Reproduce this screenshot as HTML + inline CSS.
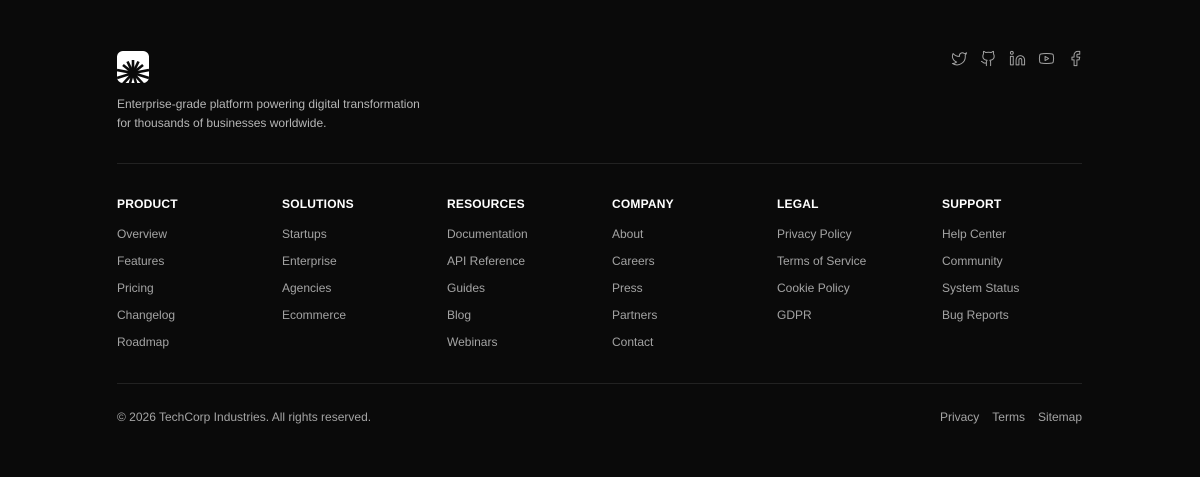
<!DOCTYPE html>
<html><head><meta charset="utf-8"><style>
*{margin:0;padding:0;box-sizing:border-box}
body{width:1200px;height:477px;background:#0a0a0a;font-family:"Liberation Sans",sans-serif;color:#a3a3a3;position:relative;overflow:hidden}
.abs{position:absolute}
.tag{left:117px;top:95px;font-size:12px;line-height:19px;color:#b5b5b5}
.hr{left:117px;width:965px;height:1px;background:#222}
.col{position:absolute;top:196px}
.col h4{font-size:12px;font-weight:bold;color:#fff;letter-spacing:.2px;height:16px;line-height:16px;margin-bottom:14px}
.col a{display:block;font-size:12px;color:#a3a3a3;height:27px;line-height:16px;text-decoration:none}
.ft{top:409px;font-size:12px;line-height:16px;color:#a3a3a3}
.icons{top:50px;left:951px;display:flex;gap:12px}
.icons svg{width:17px;height:17px;fill:none;stroke:#a3a3a3;stroke-width:1.4;stroke-linecap:round;stroke-linejoin:round}
</style></head><body>
<svg class="abs" style="left:117px;top:51px" width="32" height="32" viewBox="0 0 32 32">
<defs><clipPath id="c"><rect width="32" height="32" rx="6"/></clipPath></defs>
<rect width="32" height="32" rx="6" fill="#fff"/>
<g clip-path="url(#c)" stroke="#0a0a0a" stroke-width="2.6">
<line x1="16" y1="22" x2="16" y2="9"/>
<line x1="16" y1="22" x2="21.5" y2="10.5"/><line x1="16" y1="22" x2="10.5" y2="10.5"/>
<line x1="16" y1="22" x2="26" y2="14"/><line x1="16" y1="22" x2="6" y2="14"/>
<line x1="16" y1="22" x2="32" y2="19"/><line x1="16" y1="22" x2="0" y2="19"/>
<line x1="16" y1="22" x2="32" y2="27"/><line x1="16" y1="22" x2="0" y2="27"/>
<line x1="16" y1="22" x2="27" y2="34"/><line x1="16" y1="22" x2="5" y2="34"/>
<line x1="16" y1="22" x2="19.5" y2="34"/><line x1="16" y1="22" x2="12.5" y2="34"/>
</g>
<circle cx="16" cy="22" r="3" fill="#0a0a0a"/>
</svg>
<div class="abs tag">Enterprise-grade platform powering digital transformation<br>for thousands of businesses worldwide.</div>
<div class="abs icons">
<svg viewBox="0 0 24 24"><path d="M22 4s-.7 2.1-2 3.4c1.6 10-9.4 17.3-18 11.6 2.2.1 4.4-.6 6-2C3 15.5.5 9.6 3 5c2.2 2.6 5.6 4.1 9 4-.9-4.2 4-6.6 7-3.8 1.1 0 3-1.2 3-1.2z"/></svg>
<svg viewBox="0 0 24 24"><path d="M15 22v-4a4.8 4.8 0 0 0-1-3.5c3 0 6-2 6-5.5.1-1.3-.3-2.5-1-3.5.3-1.2.3-2.4 0-3.5 0 0-1 0-3 1.5-2.6-.5-5.4-.5-8 0C6 2 5 2 5 2c-.3 1.1-.3 2.3 0 3.5A5.4 5.4 0 0 0 4 9c0 3.5 3 5.5 6 5.5-.4.5-.7 1.1-.8 1.7-.2.6-.2 1.2-.2 1.8v4M9 18c-4.5 2-5-2-7-2"/></svg>
<svg viewBox="0 0 24 24"><path d="M16 8a6 6 0 0 1 6 6v7h-4v-7a2 2 0 0 0-4 0v7h-4v-7a6 6 0 0 1 6-6zM2 9h4v12H2z"/><circle cx="4" cy="4" r="2"/></svg>
<svg viewBox="0 0 24 24"><path d="M2.5 17a24 24 0 0 1 0-10 2 2 0 0 1 1.4-1.4 49.6 49.6 0 0 1 16.2 0A2 2 0 0 1 21.5 7a24 24 0 0 1 0 10 2 2 0 0 1-1.4 1.4 49.6 49.6 0 0 1-16.2 0A2 2 0 0 1 2.5 17"/><path d="m10 15 5-3-5-3z"/></svg>
<svg viewBox="0 0 24 24"><path d="M18 2h-3a5 5 0 0 0-5 5v3H7v4h3v8h4v-8h3l1-4h-4V7a1 1 0 0 1 1-1h3z"/></svg>
</div>
<div class="abs hr" style="top:163px"></div>
<div class="col" style="left:117px"><h4>PRODUCT</h4><a>Overview</a><a>Features</a><a>Pricing</a><a>Changelog</a><a>Roadmap</a></div>
<div class="col" style="left:282px"><h4>SOLUTIONS</h4><a>Startups</a><a>Enterprise</a><a>Agencies</a><a>Ecommerce</a></div>
<div class="col" style="left:447px"><h4>RESOURCES</h4><a>Documentation</a><a>API Reference</a><a>Guides</a><a>Blog</a><a>Webinars</a></div>
<div class="col" style="left:612px"><h4>COMPANY</h4><a>About</a><a>Careers</a><a>Press</a><a>Partners</a><a>Contact</a></div>
<div class="col" style="left:777px"><h4>LEGAL</h4><a>Privacy Policy</a><a>Terms of Service</a><a>Cookie Policy</a><a>GDPR</a></div>
<div class="col" style="left:942px"><h4>SUPPORT</h4><a>Help Center</a><a>Community</a><a>System Status</a><a>Bug Reports</a></div>
<div class="abs hr" style="top:383px"></div>
<div class="abs ft" style="left:117px">© 2026 TechCorp Industries. All rights reserved.</div>
<div class="abs ft" style="right:118px;display:flex;gap:13px"><span>Privacy</span><span>Terms</span><span>Sitemap</span></div>
</body></html>
